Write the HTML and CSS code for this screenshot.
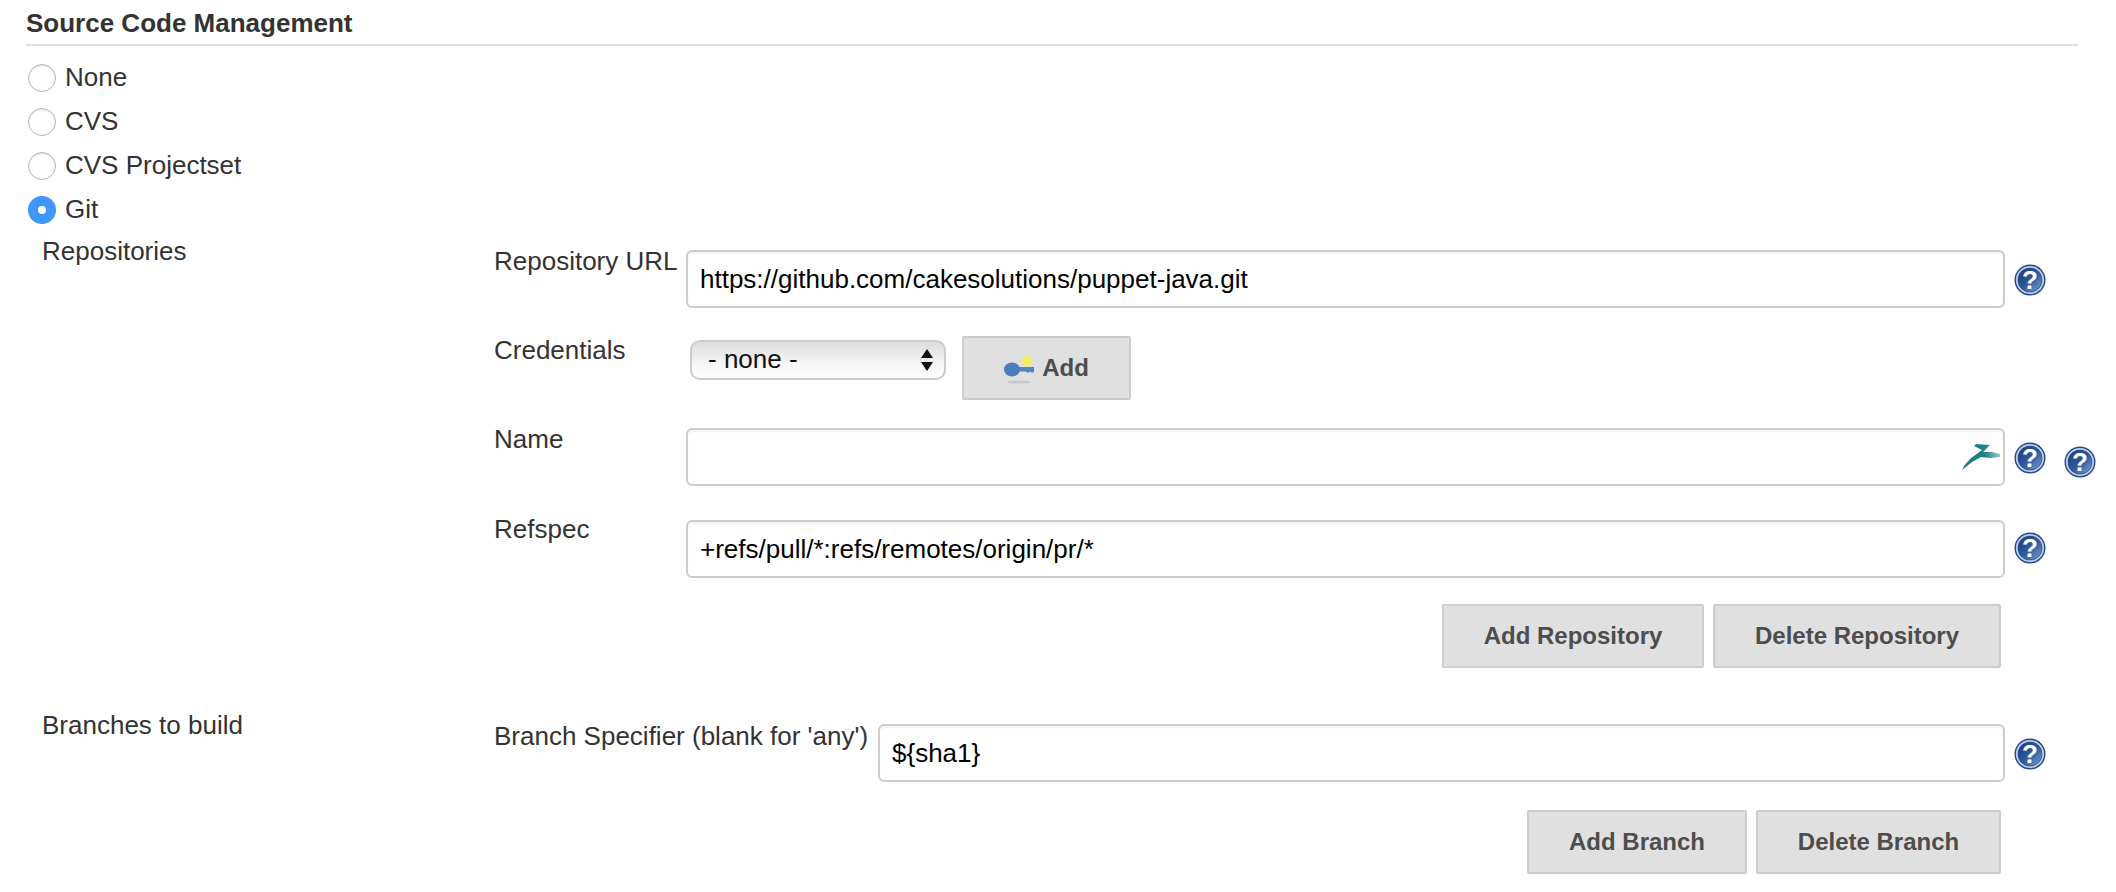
FILE: index.html
```html
<!DOCTYPE html>
<html lang="en">
<head>
  <meta charset="UTF-8" />
  <title>Source Code Management</title>
  <link rel="stylesheet" href="styles.css">
</head>
<body>
  <svg class="defs" width="0" height="0">
    <defs>
      <linearGradient id="helpFill" x1="0.1" y1="0.1" x2="0.9" y2="0.9">
        <stop offset="0" stop-color="#1d4280" />
        <stop offset="0.55" stop-color="#2f5c9e" />
        <stop offset="1" stop-color="#6f93c6" />
      </linearGradient>
      <linearGradient id="dartFill" x1="0" y1="0" x2="1" y2="0">
        <stop offset="0" stop-color="#1d7f8a" />
        <stop offset="0.6" stop-color="#1d7f8a" />
        <stop offset="1" stop-color="#9cc6cc" />
      </linearGradient>
      <filter id="soft" x="-10%" y="-10%" width="120%" height="120%">
        <feGaussianBlur stdDeviation="0.5" />
      </filter>
      <symbol id="help" viewBox="0 0 32 32">
        <circle cx="16" cy="16" r="15.5" fill="#24498a" />
        <circle cx="16" cy="16" r="13.2" fill="none" stroke="#bccde4" stroke-width="1.8" />
        <circle cx="16" cy="16" r="11.6" fill="url(#helpFill)" />
        <text x="16" y="25" text-anchor="middle" class="help-mark">?</text>
      </symbol>
    </defs>
  </svg>

  <h2 class="section-title">Source Code Management</h2>

  <div class="scm-list">
    <label class="scm-option"><input type="radio" name="scm"> None</label>
    <label class="scm-option"><input type="radio" name="scm"> CVS</label>
    <label class="scm-option"><input type="radio" name="scm"> CVS Projectset</label>
    <label class="scm-option"><input type="radio" name="scm" checked> Git</label>
  </div>

  <!-- Repositories -->
  <div class="group group-repos">
    <div class="group-name">Repositories</div>
    <div class="fields">
      <div class="row row-url">
        <label class="row-label">Repository URL</label>
        <input class="text-input" type="text" value="https://github.com/cakesolutions/puppet-java.git">
        <svg class="help"><use href="#help" /></svg>
      </div>

      <div class="row row-credentials">
        <label class="row-label">Credentials</label>
        <div class="credentials">
          <div class="select-box">
            <select class="select-input"><option>- none -</option></select>
            <svg class="select-arrows" width="14" height="24" viewBox="0 0 14 24">
              <path d="M7 1 L13 10 H1 Z M1 14 H13 L7 23 Z" fill="#111" />
            </svg>
          </div>
          <button type="button" class="btn btn-add">
            <svg class="key-icon" width="32" height="32" viewBox="0 0 32 32">
              <ellipse cx="17" cy="30" rx="12" ry="1.6" fill="#c8c8c8" filter="url(#soft)" />
              <g filter="url(#soft)">
                <path d="M16 15 H32 V19.5 L30 21 L28 19.5 L26 21 L24 19.5 H16 Z" fill="#5285c4" />
                <ellipse cx="10" cy="17.5" rx="8" ry="7" fill="#4a7dbd" />
                <circle cx="25" cy="9" r="5" fill="#f6ee5c" />
              </g>
            </svg>
            Add
          </button>
        </div>
      </div>

      <div class="row row-name">
        <label class="row-label">Name</label>
        <div class="input-box">
          <input class="text-input" type="text">
          <svg class="dart-icon" width="38" height="26" viewBox="0 0 38 26">
            <path d="M0 26 L2 22 L8 15 L12 12 L16 9 L20 6 L12 2 L14 0 L28 1 L24 5 L21 8 L30 8 L38 10 L38 13 L28 14 L19 13 L10 18 Z" fill="url(#dartFill)" filter="url(#soft)" />
          </svg>
        </div>
        <svg class="help"><use href="#help" /></svg>
        <svg class="help help-extra"><use href="#help" /></svg>
      </div>

      <div class="row row-refspec">
        <label class="row-label">Refspec</label>
        <input class="text-input" type="text" value="+refs/pull/*:refs/remotes/origin/pr/*">
        <svg class="help"><use href="#help" /></svg>
      </div>

      <div class="actions actions-repos">
        <button type="button" class="btn btn-repo-add">Add Repository</button>
        <button type="button" class="btn btn-repo-del">Delete Repository</button>
      </div>
    </div>
  </div>

  <!-- Branches -->
  <div class="group group-branches">
    <div class="group-name">Branches to build</div>
    <div class="fields">
      <div class="row row-branch">
        <label class="row-label">Branch Specifier (blank for 'any')</label>
        <input class="text-input" type="text" value="${sha1}">
        <svg class="help"><use href="#help" /></svg>
      </div>

      <div class="actions actions-branches">
        <button type="button" class="btn btn-branch-add">Add Branch</button>
        <button type="button" class="btn btn-branch-del">Delete Branch</button>
      </div>
    </div>
  </div>
</body>
</html>
```

FILE: styles.css
```css
body {
  margin: 0;
  background: #fff;
  color: #333;
  font-family: "Liberation Sans", Arial, sans-serif;
  font-size: 26px;
  overflow: hidden;
}
.defs {
  position: absolute;
}
.help-mark {
  font-family: "Liberation Sans", Arial, sans-serif;
  font-size: 26px;
  font-weight: 700;
  fill: #fff;
}
.section-title {
  margin: 0 38px 0 26px;
  height: 44px;
  border-bottom: 2px solid #e0e0e0;
  font-size: 26px;
  line-height: 46px;
  font-weight: 700;
}
.scm-list {
  padding: 10px 0 0 28px;
}
.scm-option {
  display: flex;
  align-items: center;
  height: 42px;
  padding-bottom: 2px;
  gap: 9px;
}
.scm-option input {
  appearance: none;
  width: 28px;
  height: 28px;
  margin: 2px 0 0;
  border-radius: 50%;
  background: #fff;
  border: 1px solid #b5b5b5;
  box-shadow: inset 0 1px 2px rgba(0, 0, 0, 0.12);
}
.scm-option input:checked {
  border: 10px solid #3f96fb;
  box-shadow: none;
}
.group {
  display: flex;
  padding-left: 42px;
}
.group-name {
  width: 452px;
  flex: none;
  line-height: 30px;
}
.group-repos .group-name {
  padding-top: 4px;
}
.group-repos .fields {
  margin-top: 18px;
}
.group-branches {
  margin-top: 42px;
}
.group-branches .fields {
  margin-top: 14px;
}
.fields {
  width: 1602px;
}
.row {
  display: flex;
  align-items: flex-start;
  height: 58px;
  padding-right: 50px;
  position: relative;
}
.row-credentials {
  margin-top: 28px;
}
.row-name {
  margin-top: 34px;
}
.row-refspec {
  margin-top: 34px;
}
.row-label {
  width: 192px;
  flex: none;
  line-height: 30px;
  margin-top: -4px;
}
.row-credentials .row-label {
  margin-top: -1px;
}
.row-refspec .row-label {
  margin-top: -6px;
}
.row-branch .row-label {
  width: 384px;
  margin-top: -3px;
}
.text-input {
  flex: 1;
  min-width: 0;
  box-sizing: border-box;
  width: 100%;
  height: 58px;
  padding: 0 12px;
  border: 2px solid #ccc;
  border-radius: 6px;
  box-shadow: inset 0 2px 2px rgba(0, 0, 0, 0.05);
  font-family: "Liberation Sans", Arial, sans-serif;
  font-size: 26px;
  color: #000;
  outline: none;
}
.input-box {
  flex: 1;
  display: flex;
  position: relative;
}
.dart-icon {
  position: absolute;
  top: 16px;
  right: 5px;
}
.help {
  flex: none;
  width: 32px;
  height: 32px;
  margin: 14px 0 0 9px;
}
.row-refspec .help {
  margin-top: 12px;
}
.row-name .help-extra {
  position: absolute;
  right: 0;
  top: 0;
  margin: 18px 0 0;
}
.credentials {
  display: flex;
  align-items: flex-start;
  gap: 16px;
  padding-left: 4px;
}
.select-box {
  position: relative;
  margin-top: 4px;
}
.select-input {
  appearance: none;
  display: block;
  width: 256px;
  height: 40px;
  padding: 0 16px 2px;
  border: 2px solid #ccc;
  border-radius: 10px;
  background: linear-gradient(#dcdcdc, #f4f4f4 55%, #fff);
  font-family: "Liberation Sans", Arial, sans-serif;
  font-size: 26px;
  color: #111;
  outline: none;
}
.select-arrows {
  position: absolute;
  right: 12px;
  top: 8px;
}
.btn {
  box-sizing: border-box;
  height: 64px;
  padding: 0;
  background: #e0e0e0;
  border: 2px solid #ccc;
  border-radius: 2px;
  color: #4d4d4d;
  font-family: "Liberation Sans", Arial, sans-serif;
  font-size: 24px;
  font-weight: 700;
}
.btn-add {
  width: 169px;
  display: flex;
  align-items: center;
  justify-content: center;
  gap: 8px;
}
.key-icon {
  margin-left: -2px;
}
.actions {
  display: flex;
  justify-content: flex-end;
  gap: 9px;
  padding-right: 95px;
}
.actions-repos {
  margin-top: 26px;
}
.actions-branches {
  margin-top: 28px;
}
.btn-repo-add {
  width: 262px;
}
.btn-repo-del {
  width: 288px;
}
.btn-branch-add {
  width: 220px;
}
.btn-branch-del {
  width: 245px;
}
```
